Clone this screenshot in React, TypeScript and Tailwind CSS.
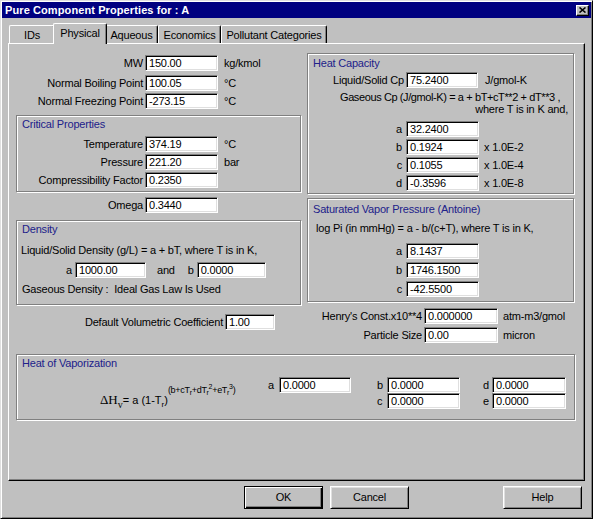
import React from "react";

function Box({ value, w, className = "" }: { value: string; w: string; className?: string }) {
  return (
    <div
      className={`${w} ${className} h-[16px] shrink-0 overflow-hidden whitespace-nowrap border border-t-[#808080] border-l-[#808080] border-b-white border-r-white bg-white pl-[3px] text-[11px] leading-[14px] shadow-[inset_1px_1px_0_#000,inset_-1px_-1px_0_#dfdfdf]`}
    >
      {value}
    </div>
  );
}

function Row({
  label,
  lw,
  value,
  w = "w-[73px]",
  unit,
  um = "ml-[6px]",
  className = "",
}: {
  label: string;
  lw: string;
  value: string;
  w?: string;
  unit?: string;
  um?: string;
  className?: string;
}) {
  return (
    <div className={`flex h-[16px] items-center whitespace-nowrap ${className}`}>
      <div className={`${lw} shrink-0 pr-[2px] text-right`}>{label}</div>
      <Box value={value} w={w} />
      {unit && <span className={um}>{unit}</span>}
    </div>
  );
}

function Group({
  title,
  tm = "mt-[1px]",
  className = "",
  children,
}: {
  title: string;
  tm?: string;
  className?: string;
  children: React.ReactNode;
}) {
  return (
    <div
      className={`border border-[#808080] shadow-[inset_1px_1px_0_#fff,1px_1px_0_#fff] ${className}`}
    >
      <div className={`${tm} h-[14px] pl-[5px] leading-[14px] text-[#21218a]`}>{title}</div>
      {children}
    </div>
  );
}

function Tab({ label, w, selected }: { label: string; w: string; selected?: boolean }) {
  if (selected) {
    return (
      <div
        className={`${w} relative z-10 -mx-[2px] mb-[-1px] flex h-[21px] items-start justify-center rounded-t-[2px] border border-b-0 border-t-white border-l-white border-r-black bg-[#c0c0c0] pt-[2px] leading-[14px] shadow-[inset_-1px_0_0_#808080]`}
      >
        {label}
      </div>
    );
  }
  return (
    <div
      className={`${w} flex h-[18px] items-center justify-center rounded-t-[2px] border border-b-0 border-t-white border-l-white border-r-black leading-[14px] shadow-[inset_-1px_0_0_#808080]`}
    >
      {label}
    </div>
  );
}

function Btn({ label, primary }: { label: string; primary?: boolean }) {
  return (
    <button
      type="button"
      className={
        primary
          ? "h-[23px] w-[79px] border border-black bg-[#c0c0c0] text-[11px] shadow-[inset_1px_1px_0_#fff,inset_-1px_-1px_0_#000,inset_-2px_-2px_0_#808080]"
          : "h-[23px] w-[79px] border border-t-white border-l-white border-r-black border-b-black bg-[#c0c0c0] text-[11px] shadow-[inset_1px_1px_0_#dfdfdf,inset_-1px_-1px_0_#808080]"
      }
    >
      {label}
    </button>
  );
}

export default function App() {
  return (
    <div className="h-[519px] w-[593px] overflow-hidden border border-t-[#dfdfdf] border-l-[#dfdfdf] border-r-black border-b-black bg-[#c0c0c0] p-[1px] font-['Liberation_Sans',Arial,sans-serif] text-[11px] tracking-[-0.2px] text-black shadow-[inset_1px_1px_0_#fff,inset_-1px_-1px_0_#808080]">
      {/* title bar */}
      <div className="flex h-[16px] items-center justify-between bg-[#000080] pl-[3px] pr-[2px]">
        <span className="text-[11px] font-bold leading-[14px] tracking-[0.1px] text-white">Pure Component Properties for : A</span>
        <div className="flex h-[11px] w-[13px] items-center justify-center border border-t-white border-l-white border-r-black border-b-black bg-[#c0c0c0] shadow-[inset_-1px_-1px_0_#808080]">
          <svg width="7" height="6" viewBox="0 0 7 6">
            <path d="M0.5 0.5 L6.5 5.5 M6.5 0.5 L0.5 5.5" stroke="#000" strokeWidth="1.6" />
          </svg>
        </div>
      </div>

      {/* tabs */}
      <div className="ml-[7px] mt-[5px] flex h-[20px] items-end">
        <Tab label="IDs" w="w-[46px]" />
        <Tab label="Physical" w="w-[54px]" selected />
        <Tab label="Aqueous" w="w-[53px]" />
        <Tab label="Economics" w="w-[63px]" />
        <Tab label="Pollutant Categories" w="w-[106px]" />
      </div>

      {/* tab panel */}
      <div className="ml-[6px] h-[438px] w-[577px] border border-t-white border-l-white border-r-black border-b-black pl-[7px] pt-[9px] shadow-[inset_-1px_-1px_0_#808080]">
        <div className="flex items-start gap-[6px]">
          {/* left column */}
          <div className="w-[285px] pt-[2px]">
            <Row label="MW" lw="w-[129px]" value="150.00" unit="kg/kmol" />
            <Row label="Normal Boiling Point" lw="w-[129px]" value="100.05" unit="°C" className="mt-[4px]" />
            <Row label="Normal Freezing Point" lw="w-[129px]" value="-273.15" unit="°C" className="mt-[2px]" />

            <Group title="Critical Properties" className="mt-[6px] pb-[3px]">
              <div className="mt-[5px] flex flex-col gap-[2px]">
                <Row label="Temperature" lw="w-[128px]" value="374.19" unit="°C" />
                <Row label="Pressure" lw="w-[128px]" value="221.20" unit="bar" />
                <Row label="Compressibility Factor" lw="w-[128px]" value="0.2350" />
              </div>
            </Group>

            <Row label="Omega" lw="w-[129px]" value="0.3440" className="mt-[5px]" />

            <Group title="Density" className="mt-[7px] pb-[8px]">
              <div className="mt-[7px] h-[14px] whitespace-nowrap pl-[4px] leading-[14px]">
                Liquid/Solid Density (g/L) = a + bT, where T is in K,
              </div>
              <div className="mt-[5px] flex h-[16px] items-center">
                <div className="w-[58px] pr-[3px] text-right">a</div>
                <Box value="1000.00" w="w-[71px]" />
                <span className="ml-[11px]">and</span>
                <span className="ml-[13px]">b</span>
                <Box value="0.0000" w="w-[69px]" className="ml-[3px]" />
              </div>
              <div className="mt-[4px] h-[14px] whitespace-nowrap pl-[5px] leading-[14px]">
                Gaseous Density :&nbsp; Ideal Gas Law Is Used
              </div>
            </Group>

            <Row label="Default Volumetric Coefficient" lw="w-[209px]" value="1.00" w="w-[50px]" className="mt-[9px]" />
          </div>

          {/* right column */}
          <div className="w-[267px]">
            <Group title="Heat Capacity" tm="mt-[2px]" className="pb-[2px]">
              <Row label="Liquid/Solid Cp" lw="w-[98px]" value="75.2400" w="w-[72px]" unit="J/gmol-K" um="ml-[7px]" className="mt-[2px]" />
              <div className="mt-[3px] whitespace-nowrap leading-[12px]">
                <div className="pl-[32px] tracking-[-0.4px]">Gaseous Cp (J/gmol-K) = a + bT+cT**2 + dT**3 ,</div>
                <div className="pr-[5px] text-right">where T is in K and,</div>
              </div>
              <div className="mt-[6px] flex flex-col gap-[2px]">
                <Row label="a" lw="w-[98px] pr-[4px]" value="32.2400" />
                <Row label="b" lw="w-[98px] pr-[4px]" value="0.1924" unit="x 1.0E-2" um="ml-[5px]" />
                <Row label="c" lw="w-[98px] pr-[4px]" value="0.1055" unit="x 1.0E-4" um="ml-[5px]" />
                <Row label="d" lw="w-[98px] pr-[4px]" value="-0.3596" unit="x 1.0E-8" um="ml-[5px]" />
              </div>
            </Group>

            <Group title="Saturated Vapor Pressure (Antoine)" tm="mt-[3px]" className="mt-[4px] pb-[4px]">
              <div className="mt-[5px] h-[14px] whitespace-nowrap pl-[8px] leading-[14px]">
                log Pi (in mmHg) = a - b/(c+T), where T is in K,
              </div>
              <div className="mt-[8px] flex flex-col gap-[3px]">
                <Row label="a" lw="w-[98px] pr-[4px]" value="8.1437" />
                <Row label="b" lw="w-[98px] pr-[4px]" value="1746.1500" />
                <Row label="c" lw="w-[98px] pr-[4px]" value="-42.5500" />
              </div>
            </Group>

            <Row label="Henry's Const.x10**4" lw="w-[117px]" value="0.000000" w="w-[74px]" unit="atm-m3/gmol" um="ml-[5px]" className="mt-[6px]" />
            <Row label="Particle Size" lw="w-[117px]" value="0.00" w="w-[74px]" unit="micron" um="ml-[5px]" className="mt-[3px]" />
          </div>
        </div>

        {/* heat of vaporization */}
        <Group title="Heat of Vaporization" className="mt-[11px] w-[559px] pb-[10px]">
          <div className="mt-[7px] flex items-start">
            <div className="h-[30px] w-[251px] whitespace-nowrap pl-[83px] pt-[10px] leading-[14px] tracking-normal">
              <span className="font-['Liberation_Serif',serif] text-[13px]">ΔH</span>
              <span className="font-['Liberation_Serif',serif] text-[10px] leading-[0px] align-[-4px]">v</span>
              <span>= a (1-T</span>
              <span className="text-[8px] leading-[0px] align-[-3px]">r</span>
              <span>)</span>
              <span className="text-[9px] leading-[0px] tracking-[-0.3px] align-[11px]">
                (b+cT<span className="text-[7px] leading-[0px] align-[-2px]">r</span>+dT
                <span className="text-[7px] leading-[0px] align-[-2px]">r</span>
                <span className="text-[7px] leading-[0px] align-[4px]">2</span>+eT
                <span className="text-[7px] leading-[0px] align-[-2px]">r</span>
                <span className="text-[7px] leading-[0px] align-[4px]">3</span>)
              </span>
            </div>
            <div className="flex h-[16px] items-center">
              <span className="w-[11px]">a</span>
              <Box value="0.0000" w="w-[72px]" />
            </div>
            <div className="ml-[26px] flex flex-col">
              <div className="flex h-[16px] items-center">
                <span className="w-[10px]">b</span>
                <Box value="0.0000" w="w-[73px]" />
              </div>
              <div className="flex h-[16px] items-center">
                <span className="w-[10px]">c</span>
                <Box value="0.0000" w="w-[73px]" />
              </div>
            </div>
            <div className="ml-[23px] flex flex-col">
              <div className="flex h-[16px] items-center">
                <span className="w-[9px]">d</span>
                <Box value="0.0000" w="w-[74px]" />
              </div>
              <div className="flex h-[16px] items-center">
                <span className="w-[9px]">e</span>
                <Box value="0.0000" w="w-[74px]" />
              </div>
            </div>
          </div>
        </Group>
      </div>

      {/* buttons */}
      <div className="mt-[5px] flex">
        <div className="ml-[242px] flex gap-[7px]">
          <Btn label="OK" primary />
          <Btn label="Cancel" />
        </div>
        <div className="ml-[94px]">
          <Btn label="Help" />
        </div>
      </div>
    </div>
  );
}
